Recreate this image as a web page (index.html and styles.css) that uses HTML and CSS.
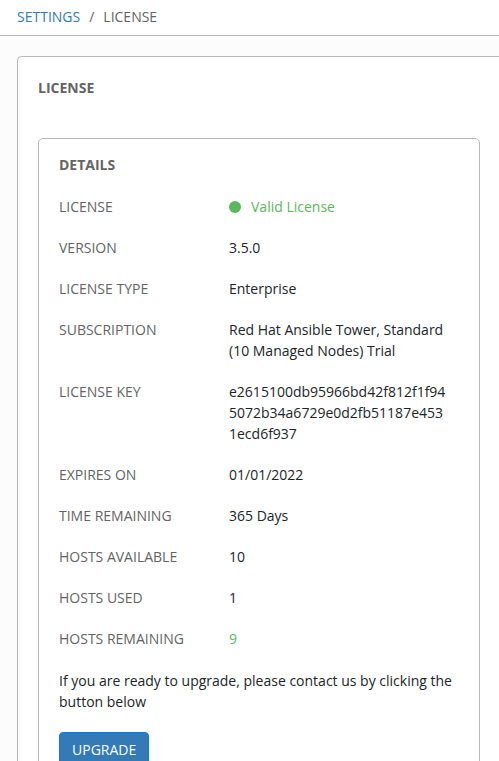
FILE: index.html
```html
<!DOCTYPE html>
<html lang="en">
<head>
<meta charset="utf-8">
<meta name="viewport" content="width=device-width, initial-scale=1">
<title>License</title>
<link rel="stylesheet" href="styles.css">
</head>
<body>
<nav class="breadcrumb" aria-label="Breadcrumb">
  <a href="#">SETTINGS</a><span class="separator">/</span><span>LICENSE</span>
</nav>
<main class="panel">
  <h1 class="title">LICENSE</h1>
  <section class="card">
    <h2 class="title">DETAILS</h2>
    <dl class="details">
      <div class="row"><dt>LICENSE</dt><dd class="good"><span class="dot"></span>Valid License</dd></div>
      <div class="row"><dt>VERSION</dt><dd>3.5.0</dd></div>
      <div class="row"><dt>LICENSE TYPE</dt><dd>Enterprise</dd></div>
      <div class="row"><dt>SUBSCRIPTION</dt><dd>Red Hat Ansible Tower, Standard (10 Managed Nodes) Trial</dd></div>
      <div class="row"><dt>LICENSE KEY</dt><dd>e2615100db95966bd42f812f1f945072b34a6729e0d2fb51187e4531ecd6f937</dd></div>
      <div class="row"><dt>EXPIRES ON</dt><dd>01/01/2022</dd></div>
      <div class="row"><dt>TIME REMAINING</dt><dd>365 Days</dd></div>
      <div class="row"><dt>HOSTS AVAILABLE</dt><dd>10</dd></div>
      <div class="row"><dt>HOSTS USED</dt><dd>1</dd></div>
      <div class="row"><dt>HOSTS REMAINING</dt><dd class="good">9</dd></div>
    </dl>
    <p class="note">If you are ready to upgrade, please contact us by clicking the button below</p>
    <button class="upgrade" type="button">UPGRADE</button>
  </section>
</main>
</body>
</html>
```
FILE: styles.css
```css
* {
  box-sizing: border-box;
}

html {
  overflow: hidden;
}

body {
  margin: 0;
  background: #fcfcfc;
  color: #212529;
  font: 14px/21px "Open Sans", "Noto Sans", sans-serif;
}

.breadcrumb {
  display: flex;
  padding: 6px 17px 8px;
  border-bottom: 1px solid #b7b7b7;
  background: #fff;
  color: #646464;
}

.breadcrumb a {
  color: #337ab7;
  text-decoration: none;
}

.separator {
  padding: 0 9px;
}

.panel {
  margin: 20px -1px 0 17px;
  padding: 20px;
  border: 1px solid #b7b7b7;
  border-right: 0;
  border-radius: 5px 0 0 5px;
  background: #fff;
}

.title {
  margin: 0;
  color: #646464;
  font-size: 14px;
  font-weight: 700;
}

.card {
  margin-top: 40px;
  padding: 15px 20px 20px;
  border: 1px solid #b7b7b7;
  border-radius: 5px;
}

.details {
  display: grid;
  gap: 20px;
  margin: 21px 0;
}

.row {
  display: grid;
  grid-template-columns: 170px minmax(0, 1fr);
}

dt {
  color: #646464;
}

dd {
  margin: 0;
  padding-right: 10px;
  overflow-wrap: anywhere;
}

.good {
  color: #5cb85c;
}

.dot {
  display: inline-block;
  width: 12px;
  height: 12px;
  margin-right: 10px;
  border-radius: 50%;
  background: #5cb85c;
  vertical-align: -1px;
}

.note {
  margin: 20px 0;
}

.upgrade {
  padding: 6px 12px;
  border: 1px solid #007bff;
  border-radius: 4px;
  background: #337ab7;
  color: #fff;
  font: inherit;
}
```
